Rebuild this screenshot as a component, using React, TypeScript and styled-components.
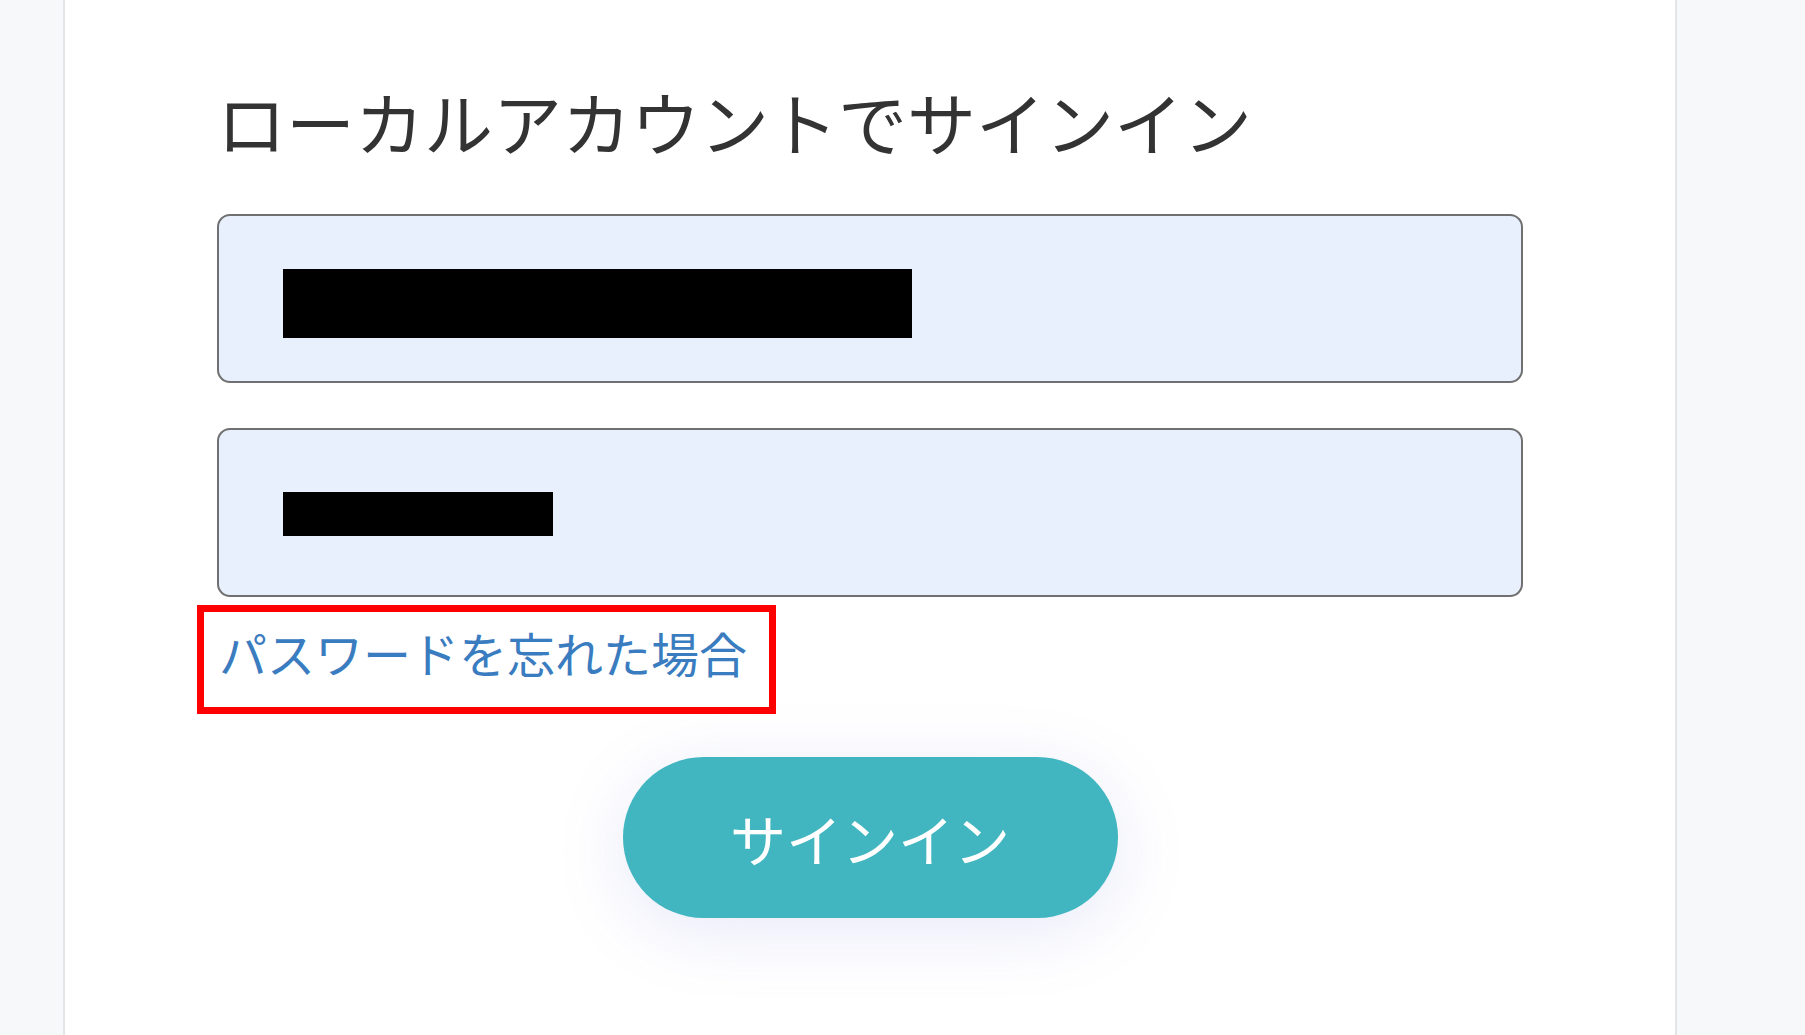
import styled, { createGlobalStyle } from "styled-components"

const GlobalStyle = createGlobalStyle`
  html, body {
    margin: 0;
    padding: 0;
    background: #f7f8fa;
    font-family: "Noto Sans CJK JP", "Noto Sans", sans-serif;
  }
`

// Page background with the card shifted left like in the capture
const Page = styled.div`
  display: flex;
  padding-left: 63px;
  height: 1035px;
  overflow: hidden;
`

const Card = styled.div`
  width: 1614px;
  min-height: 1035px;
  box-sizing: border-box;
  background: #ffffff;
  border-left: 2px solid #e4e5e8;
  border-right: 2px solid #e4e5e8;
  padding: 80px 152px 0 152px;
  display: flex;
  flex-direction: column;
`

const Title = styled.h2`
  margin: 0 0 52px 0;
  font-size: 69px;
  line-height: 82px;
  font-weight: 400;
  color: #333333;
  letter-spacing: 0;
`

const Field = styled.div<{ $gap?: number }>`
  height: 169px;
  box-sizing: border-box;
  margin-top: ${(p) => p.$gap ?? 0}px;
  border: 2px solid #707070;
  border-radius: 13px;
  background: #e8f0fe;
  display: flex;
  align-items: center;
  padding-left: 64px;
`

// black redaction bar covering the filled values
const Redacted = styled.span<{ $w: number; $h: number; $shift?: number }>`
  display: block;
  width: ${(p) => p.$w}px;
  height: ${(p) => p.$h}px;
  margin-top: ${(p) => p.$shift ?? 0}px;
  background: #000000;
`

const LinkRow = styled.div`
  display: flex;
  margin-top: 8px;
  margin-left: -20px;
`

const ForgotLink = styled.a`
  display: block;
  border: 7px solid #ff0000;
  padding: 10px 22px 25px 15px;
  font-size: 48px;
  line-height: 60px;
  color: #3a7cc0;
  text-decoration: none;
  cursor: pointer;
`

const ButtonRow = styled.div`
  display: flex;
  justify-content: center;
  margin-top: 43px;
`

const SignInButton = styled.button`
  width: 495px;
  height: 161px;
  border: none;
  border-radius: 81px;
  background: #41b6c0;
  color: #ffffff;
  font-family: "Noto Sans CJK JP", "Noto Sans", sans-serif;
  font-size: 56px;
  font-weight: 400;
  cursor: pointer;
  box-shadow: 0 14px 70px rgba(110, 120, 220, 0.16);
`

export default function App() {
  return (
    <>
      <GlobalStyle />
      <Page>
        <Card>
          <Title>ローカルアカウントでサインイン</Title>
          <Field>
            <Redacted $w={629} $h={69} $shift={10} />
          </Field>
          <Field $gap={45}>
            <Redacted $w={270} $h={44} $shift={2} />
          </Field>
          <LinkRow>
            <ForgotLink>パスワードを忘れた場合</ForgotLink>
          </LinkRow>
          <ButtonRow>
            <SignInButton type="button">サインイン</SignInButton>
          </ButtonRow>
        </Card>
      </Page>
    </>
  )
}
